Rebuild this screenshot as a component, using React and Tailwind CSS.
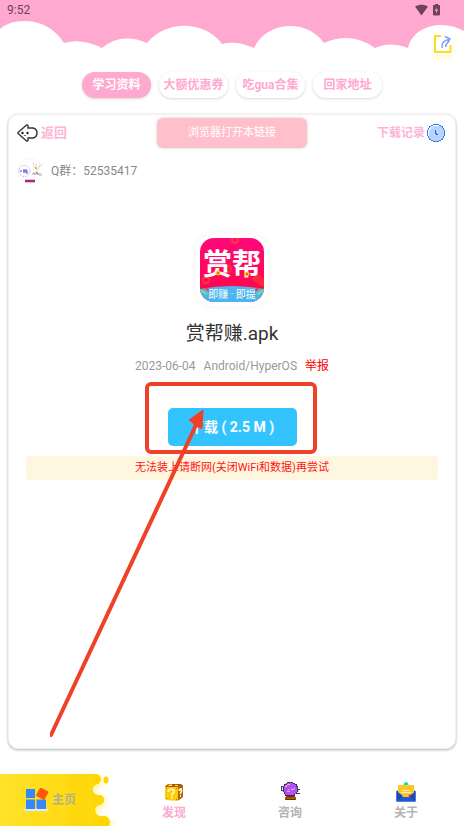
import React from "react";

const tabs = ["学习资料", "大额优惠券", "吃gua合集", "回家地址"];

function Clouds() {
  return (
    <svg className="absolute inset-0 h-[62px] w-full" viewBox="0 0 464 62" preserveAspectRatio="none" aria-hidden="true">
      <path
        fill="#fff"
        d="M0 29Q9 21 24 21C42 21 55 29 64 43Q82 38 102 48Q121 32 147 43C166 20 204 20 222 44Q236 40 254 48C267 20 308 19 324 43Q351 31 375 48Q390 41 408 48C413 25 444 19 464 31V62H0Z"
      />
    </svg>
  );
}

function ShareIcon() {
  return (
    <svg className="h-5 w-5" viewBox="0 0 20 20" fill="none" aria-hidden="true">
      <path d="M8 2H2V18H17.500V11" stroke="#ffdc19" strokeWidth="2" strokeLinejoin="round" />
      <path d="M9 14C8.500 9 11 6 16.500 5.500M12 2.500L17 5L14 9.500M12.500 13C12.500 10.500 14 9 16 7.500" stroke="#799ff5" strokeWidth="1.500" />
    </svg>
  );
}

function StatusIcons() {
  return (
    <svg className="h-3 w-[26px]" viewBox="0 0 26 12" fill="#6e4358" aria-hidden="true">
      <path d="M0 2.500C4 0 9 0 13 2.500L6.500 11.500Z" />
      <path fillRule="evenodd" d="M20 1V0H23V1H24Q25 1 25 2V10Q25 11.500 24 11.500H19Q18 11.500 18 10V2Q18 1 19 1ZM21.500 3L20 7H21.200V9.500L23 5.500H21.500Z" />
    </svg>
  );
}

function BackIcon() {
  return (
    <svg className="h-[18px] w-[21px]" viewBox="0 0 21 18" aria-hidden="true">
      <path d="M9.500 1Q11 .5 11 2V4H16Q20 5 20 9T16 14H11V16Q11 17.500 9.500 17L1 9.500V8.500Z" fill="#fff" stroke="#333" strokeWidth="1.400" />
      <circle cx="5.500" cy="9" r="1.200" fill="#222" />
      <circle cx="10.500" cy="9" r="1.200" fill="#222" />
      <path d="M7 11H9V12H7Z" fill="#f33" />
    </svg>
  );
}

function ClockIcon() {
  return (
    <svg className="h-[18px] w-[18px]" viewBox="0 0 18 18" shapeRendering="crispEdges" aria-hidden="true">
      <path d="M6 0H12V1H14V2H16V4H17V6H18V12H17V14H16V16H14V17H12V18H6V17H4V16H2V14H1V12H0V6H1V4H2V2H4V1H6Z" fill="#2580fa" />
      <path d="M6 1H12V2H14V3H15V4H16V6H17V12H16V14H15V15H14V16H12V17H6V16H4V15H3V14H2V12H1V6H2V4H3V3H4V2H6Z" fill="#b9d3fc" />
      <path d="M6 1H12V2H6V3H4V5H3V7H2V12H1V6H2V4H3V3H4V2H6Z" fill="#fff" />
      <path d="M8 6H9V9H10V10H11V11H9V10H8Z" fill="#1769e8" />
    </svg>
  );
}

function Avatar() {
  return (
    <svg className="h-[26px] w-[26px] rounded-full" viewBox="0 0 26 26" aria-hidden="true">
      <circle cx="13" cy="13" r="12.500" fill="#fff" stroke="#f3f3f3" />
      <circle cx="7.500" cy="13" r="5.500" fill="none" stroke="#d7a8dd" strokeWidth=".9" strokeDasharray="2 1" />
      <path d="M3 13H5M9 15H11" stroke="#d91b77" strokeWidth="1.200" />
      <path d="M6 13H11M7 11V15M9 11V15" stroke="#4470e4" strokeWidth="1.200" />
      <path d="M16 8L19 11M19 6V12M23 7L19 15" stroke="#e8bda5" strokeWidth=".8" />
      <path d="M16 6H17M24 7H25M18 10H20" stroke="#c9a438" strokeWidth="1.200" />
      <path d="M15 17L17 14L18 17L20 14L22 17H25M16 16H24" fill="none" stroke="#a7a6ad" strokeWidth=".8" />
      <path d="M19 14L21 16" stroke="#e5467e" />
      <path d="M8 23H18" stroke="#a72481" strokeWidth="2.400" />
    </svg>
  );
}

function AppIcon() {
  return (
    <div className="mx-auto h-[72px] w-[72px] rounded-[18px] bg-white p-1 shadow-[0_0_8px_rgba(0,0,0,0.06)]">
      <svg className="h-16 w-16" viewBox="0 0 64 64" role="img" aria-label="赏帮赚">
        <defs>
          <linearGradient id="appRed" x2="0" y2="1">
            <stop stopColor="#ff087b" />
            <stop offset="1" stopColor="#ff073e" />
          </linearGradient>
          <clipPath id="appClip"><rect width="64" height="64" rx="14" /></clipPath>
        </defs>
        <g clipPath="url(#appClip)">
          <rect width="64" height="64" fill="url(#appRed)" />
          <g fill="none" stroke="#ff3346" strokeWidth="2">
            <circle cx="35" cy="2" r="3" /><circle cx="6" cy="42" r="3" /><circle cx="28" cy="31" r="3" />
          </g>
          <path d="M51 41L58 36L64 41V49L58 46Z" fill="#ff263d" />
          <path d="M0 51Q32 45 64 51V64H0Z" fill="#4db5ee" />
          <path d="M0 52L7 56L1 53M64 52L57 56L63 53" stroke="#94dc64" strokeWidth="1.500" />
          <path d="M6 50L9 53M58 50L55 53" stroke="#ff315a" strokeWidth="2" />
          <text x="32" y="37" textAnchor="middle" fill="#fff" fontSize="29" fontWeight="700" fontFamily="Noto Sans CJK SC, sans-serif">赏帮</text>
          <circle cx="18" cy="35" r="1.800" fill="#e86a19" stroke="#ffd400" strokeWidth="1.200" />
          <circle cx="47" cy="36" r="1.800" fill="#e86a19" stroke="#ffd400" strokeWidth="1.200" />
          <text x="32" y="60" textAnchor="middle" fill="#fff" fontSize="10" fontFamily="Noto Sans CJK SC, sans-serif">即赚<tspan fontFamily="Roboto, sans-serif"> · </tspan>即提</text>
        </g>
      </svg>
    </div>
  );
}

function Annotation() {
  return (
    <svg className="pointer-events-none absolute -top-[27px] left-1/2 h-[360px] w-[272px] -translate-x-[182px]" viewBox="50 381 272 360" fill="none" aria-hidden="true">
      <rect x="147" y="384" width="168" height="68" rx="4" stroke="#ef4028" strokeWidth="4" />
      <path d="M51 735L196 425" stroke="#ef4028" strokeWidth="4" strokeLinecap="round" />
      <path d="M203 410L202 429L196 426L189 420Z" fill="#ef4028" stroke="#ef4028" />
    </svg>
  );
}

function HomeIcon() {
  return (
    <svg className="h-6 w-[26px]" viewBox="0 0 26 24" aria-hidden="true">
      <path d="M3 20H23L26 23H0Z" fill="#e4eaf5" />
      <path d="M3 1H12V10H3ZM3 11.500H12V21H3ZM13.500 11.500H23V21H13.500Z" fill="#3388ff" />
      <rect x="14.500" y="1" width="9.500" height="9.500" rx="1" transform="rotate(28 19.250 5.750)" fill="#ff560c" />
    </svg>
  );
}

function DiscoverIcon() {
  return (
    <svg className="h-5 w-5" viewBox="0 0 20 20" aria-hidden="true">
      <path d="M1 4L5 2H17L19 4V15L14 18.500L3 18L1 16.500Z" fill="#edaa00" />
      <path d="M4 2H17L19 4L14 5H1Z" fill="#a95b08" />
      <path d="M5 2.500H8V4H4ZM11 3H14V4H11Z" fill="#ffe262" />
      <path d="M1 5H14V18.500L3 18L1 16.500Z" fill="#ffcb05" />
      <path d="M14 5L19 3.500V15L14 18.500Z" fill="#b66009" />
      <path d="M2 6H3V7H2ZM12 6H13V7H12ZM2 16H3V17H2ZM12 17H13V18H12Z" fill="#bd7d00" />
      <path d="M4.500 10V8.500Q5.500 7 8 7.500Q10.500 8 10 10Q9.500 11.500 8 12V13.500M7 15.500H9M15.500 9V7.500Q17.500 6 17.500 8T16.500 11V12M16 14H17" fill="none" stroke="#fff7ba" strokeWidth="1.800" />
    </svg>
  );
}

function ConsultIcon() {
  return (
    <svg className="h-5 w-5" viewBox="0 0 20 20" shapeRendering="crispEdges" aria-hidden="true">
      <path d="M4 4H1V8H4M17 7H20V11H17" fill="none" stroke="#444" />
      <path d="M2 5H4V7H2ZM17 8H19V10H17Z" fill="#ddd" />
      <path d="M7 0H13V1H15V2H17V4H18V10H17V12H15V14H5V12H4V10H3V4H4V2H6V1H7Z" fill="#43315d" />
      <path d="M7 1H13V2H15V3H16V5H17V10H16V12H14V13H6V12H5V10H4V4H5V3H7Z" fill="#b052ee" />
      <path d="M7 2H10V3H7V5H5V4H6V3H7ZM6 8H8V7H9V8H6ZM11 7H14V8H11ZM14 6H15V7H14ZM7 9H10V10H7Z" fill="#e9b3fb" />
      <path d="M6 14H15V15H16V18H5V15H6Z" fill="#a75405" />
      <path d="M7 14H14V15H7ZM6 17H15V18H6Z" fill="#633006" />
    </svg>
  );
}

function AboutIcon() {
  return (
    <svg className="h-5 w-5" viewBox="0 0 20 20" aria-hidden="true">
      <path d="M7.500 3Q8 0 10 0T12.500 3M0.500 9L3 7H17L19.500 9Z" fill="#16dfb6" />
      <path d="M.5 9H19.500V19.500H.5Z" fill="#1750ca" />
      <path d="M2 3H18V13L14 15H6L2 12Z" fill="#ffc629" />
      <path d="M6 8.500H14M5 10.500H15" stroke="#fff1b0" />
      <path d="M12 13L17 12L14 16Z" fill="#e8394b" />
      <path d="M.5 9L7 14L.5 19.500ZM19.500 9L13 15L19.500 19.500Z" fill="#174bc0" />
      <path d="M.5 19.500L6 15H14L19.500 19.500Z" fill="#1f59d4" />
    </svg>
  );
}

const links = [
  { label: "发现", Icon: DiscoverIcon, color: "text-[#ffa8d0]" },
  { label: "咨询", Icon: ConsultIcon, color: "text-[#b4b4b4]" },
  { label: "关于", Icon: AboutIcon, color: "text-[#b4b4b4]" },
];

export default function App() {
  return (
    <div className="flex min-h-screen flex-col bg-white font-['Roboto','Noto_Sans_CJK_SC',sans-serif]">
      <header className="relative h-[62px] bg-[#ffa8d0]">
        <Clouds />
        <div className="relative flex h-5 items-center justify-between pr-[23px] pl-[7px] text-xs text-[#6e4358]">
          <span>9:52</span>
          <StatusIcons />
        </div>
        <button type="button" aria-label="分享" className="absolute top-[34px] right-[11px] shadow-[0_4px_5px_#fff9d9]">
          <ShareIcon />
        </button>
      </header>

      <div className="mt-[10px] flex justify-center gap-2">
        {tabs.map((tab, i) => (
          <button
            key={tab}
            type="button"
            className={`h-[26px] w-[69px] rounded-full text-xs font-bold whitespace-nowrap shadow-[0_1px_3px_rgba(0,0,0,0.16)] ${
              i === 0 ? "bg-[#ffa8d0] text-white" : "bg-white text-[#ffa8d0]"
            }`}
          >
            {tab}
          </button>
        ))}
      </div>

      <main className="mx-2 mt-4 mb-[25px] flex-1 rounded-[10px] border border-[#f0f0f0] bg-white px-2 pt-[3px] shadow-[0_1px_3px_rgba(0,0,0,0.3)]">
        <div className="grid grid-cols-[1fr_150px_1fr] items-center">
          <button type="button" className="flex items-center gap-[3px] text-[13px] font-bold text-[#ffb4d6]">
            <BackIcon />
            返回
          </button>
          <button type="button" className="h-[30px] rounded-md bg-[#ffc0cb] text-[11px] text-white shadow-[0_0_3px_rgba(0,0,0,0.2)]">
            浏览器打开本链接
          </button>
          <button type="button" className="flex items-center justify-end gap-[2px] pr-[2px] text-xs font-bold text-[#ffb4d6]">
            下载记录
            <ClockIcon />
          </button>
        </div>

        <div className="mt-[10px] flex items-center gap-2 text-xs text-[#888888]">
          <Avatar />
          <span>Q群：52535417</span>
        </div>

        <section className="mt-[50px] px-[9px] text-center">
          <AppIcon />
          <h1 className="mt-[14px] text-[19px] leading-7 text-[#333333]">赏帮赚.apk</h1>
          <p className="mt-2 flex justify-center gap-2 text-xs leading-5 text-[#999999]">
            <span>2023-06-04</span>
            <span>Android/HyperOS</span>
            <a href="#report" className="text-[#ff0000]">举报</a>
          </p>
          <div className="relative mt-8">
            <button type="button" className="mx-auto block h-[38px] w-[129px] rounded-[5px] bg-[#33c4ff] text-sm font-bold text-white">
              下载 ( 2.5 M )
            </button>
            <Annotation />
          </div>
          <p className="mt-[10px] rounded bg-[#fff6e0] text-[11px] leading-6 text-[#ff1515]">无法装上请断网(关闭WiFi和数据)再尝试</p>
        </section>
      </main>

      <nav className="grid h-[52px] grid-cols-4 text-xs font-bold">
        <a href="#home" className="relative flex items-center gap-[3px] pl-[23px] text-[#b4b08c]">
          <svg className="absolute top-0 left-0 h-[52px] w-[116px]" viewBox="0 0 116 52" aria-hidden="true">
            <defs>
              <linearGradient id="navYellow">
                <stop stopColor="#ffe22d" />
                <stop offset="1" stopColor="#ffd500" />
              </linearGradient>
              <filter id="navGlow" x="-20%" y="-20%" width="150%" height="150%">
                <feDropShadow dx="3" dy="3" stdDeviation="3" floodColor="#ffdc00" floodOpacity=".3" />
              </filter>
            </defs>
            <g fill="url(#navYellow)" filter="url(#navGlow)">
              <path d="M0 0H97C102 1 102 9 98 10C91 11 91 20 98 21H100C106 22 105 30 100 31C93 32 94 41 100 42H105C110 43 111 49 109 52H0Z" />
            </g>
            <ellipse cx="106" cy="6" rx="2.500" ry="3.500" fill="#ffd500" />
          </svg>
          <span className="relative"><HomeIcon /></span>
          <span className="relative">主页</span>
        </a>
        {links.map(({ label, Icon, color }) => (
          <a key={label} href={`#${label}`} className={`flex flex-col items-center gap-[3px] pt-2 ${color}`}>
            <Icon />
            {label}
          </a>
        ))}
      </nav>
    </div>
  );
}
